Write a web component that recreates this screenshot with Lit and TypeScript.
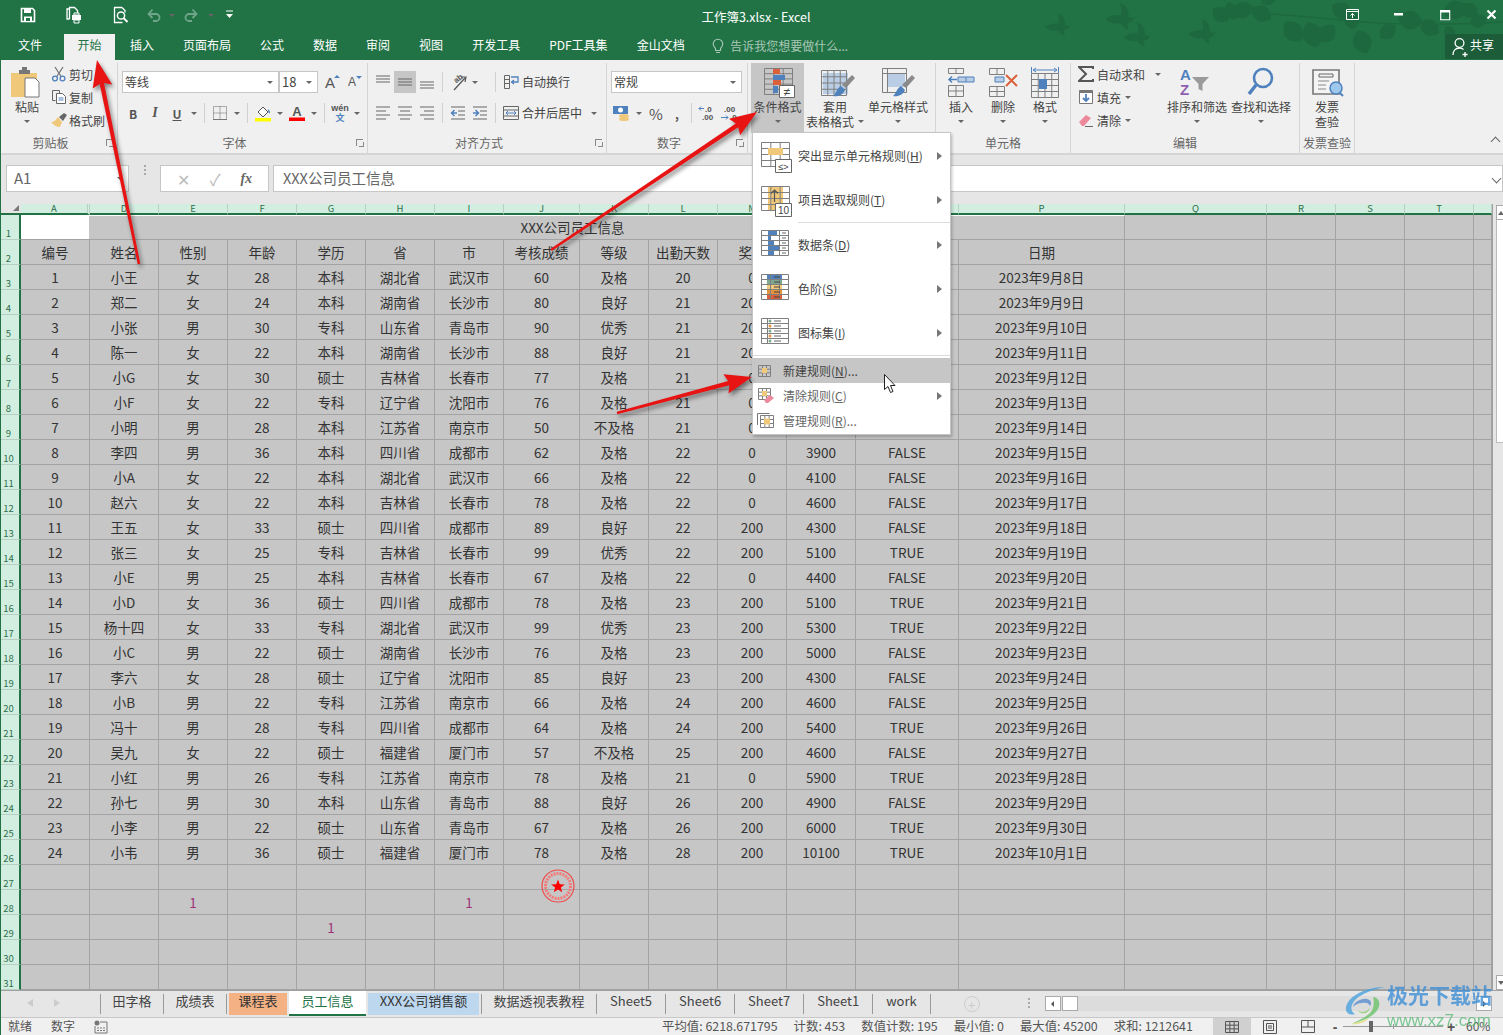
import { LitElement, html, svg, css } from 'lit';
import { customElement } from 'lit/decorators.js';

// Sheet data: rows 3..26 of the workbook
const DATA = `1 小王 女 28 本科 湖北省 武汉市 60 及格 20 0 - - 2023年9月8日
2 郑二 女 24 本科 湖南省 长沙市 80 良好 21 200 - - 2023年9月9日
3 小张 男 30 专科 山东省 青岛市 90 优秀 21 200 - - 2023年9月10日
4 陈一 女 22 本科 湖南省 长沙市 88 良好 21 200 - - 2023年9月11日
5 小G 女 30 硕士 吉林省 长春市 77 及格 21 0 - - 2023年9月12日
6 小F 女 22 专科 辽宁省 沈阳市 76 及格 21 0 - - 2023年9月13日
7 小明 男 28 本科 江苏省 南京市 50 不及格 21 0 - - 2023年9月14日
8 李四 男 36 本科 四川省 成都市 62 及格 22 0 3900 FALSE 2023年9月15日
9 小A 女 22 本科 湖北省 武汉市 66 及格 22 0 4100 FALSE 2023年9月16日
10 赵六 女 22 本科 吉林省 长春市 78 及格 22 0 4600 FALSE 2023年9月17日
11 王五 女 33 硕士 四川省 成都市 89 良好 22 200 4300 FALSE 2023年9月18日
12 张三 女 25 专科 吉林省 长春市 99 优秀 22 200 5100 TRUE 2023年9月19日
13 小E 男 25 本科 吉林省 长春市 67 及格 22 0 4400 FALSE 2023年9月20日
14 小D 女 36 硕士 四川省 成都市 78 及格 23 200 5100 TRUE 2023年9月21日
15 杨十四 女 33 专科 湖北省 武汉市 99 优秀 23 200 5300 TRUE 2023年9月22日
16 小C 男 22 硕士 湖南省 长沙市 76 及格 23 200 5000 FALSE 2023年9月23日
17 李六 女 28 硕士 辽宁省 沈阳市 85 良好 23 200 4300 FALSE 2023年9月24日
18 小B 男 22 专科 江苏省 南京市 66 及格 24 200 4600 FALSE 2023年9月25日
19 冯十 男 28 专科 四川省 成都市 64 及格 24 200 5400 TRUE 2023年9月26日
20 吴九 女 22 硕士 福建省 厦门市 57 不及格 25 200 4600 FALSE 2023年9月27日
21 小红 男 26 专科 江苏省 南京市 78 及格 21 0 5900 TRUE 2023年9月28日
22 孙七 男 30 本科 山东省 青岛市 88 良好 26 200 4900 FALSE 2023年9月29日
23 小李 男 22 硕士 山东省 青岛市 67 及格 26 200 6000 TRUE 2023年9月30日
24 小韦 男 36 硕士 福建省 厦门市 78 及格 28 200 10100 TRUE 2023年10月1日`
  .split('\n')
  .map((l) => l.split(' ').map((c) => (c === '-' ? '' : c)));

const COLS = ['A', 'D', 'E', 'F', 'G', 'H', 'I', 'J', 'K', 'L', 'M', 'N', 'O', 'P', 'Q', 'R', 'S', 'T', ''];
const HEAD = ['编号', '姓名', '性别', '年龄', '学历', '省', '市', '考核成绩', '等级', '出勤天数', '奖金', '', '', '日期'];
const STRAY: Record<string, string> = { '28-2': '1', '28-6': '1', '29-4': '1' };

const NAV = ['文件', '开始', '插入', '页面布局', '公式', '数据', '审阅', '视图', '开发工具', 'PDF工具集', '金山文档'];

const GRAY = '#7f7f7f';
const BLUE = '#4f81bd';
const ORANGE = '#f0c87a';

// table outline with inner lines, used by most of the ribbon icons
const grid = (x: number, y: number, w: number, h: number, c: number, r: number, color = GRAY) => {
  let d = `M${x} ${y}h${w}v${h}h${-w}z`;
  for (let i = 1; i < c; i++) d += `M${x + (w * i) / c} ${y}v${h}`;
  for (let i = 1; i < r; i++) d += `M${x} ${y + (h * i) / r}h${w}`;
  return svg`<path d=${d} fill="none" stroke=${color} />`;
};

const icon = (w: number, h: number, body: unknown) =>
  html`<svg width=${w} height=${h} viewBox="0 0 ${w} ${h}">${body}</svg>`;

const brush = (dx: number, dy: number) => svg`
  <path d="M${dx + 24} ${dy + 2}l3 3-9 10-4-3z" fill="#8a8a8a" />
  <path d="M${dx + 13} ${dy + 13}l4 4c-2 5-7 7-12 6 3-2 3-7 8-10z" fill=${BLUE} />`;

const lines = (ys: number[], x: number, w: number, color = '#666') =>
  svg`<path d=${ys.map((y) => `M${x} ${y}h${w}`).join('')} stroke=${color} fill="none" />`;

const ICONS = {
  save: icon(16, 16, svg`<path d="M1.5 1.5h11l2 2v11h-13z" fill="none" stroke="#fff" stroke-width="1.6"/><path d="M4 2h7v4H4zM4 9.5h8v5H4z" fill="#fff"/><path d="M6 11h4v3H6z" fill="#217346"/>`),
  printPrev: icon(18, 18, svg`<path d="M4.5 13V1.5h5l3 3V7M4.5 13H2V3h2.5" fill="none" stroke="#fff" stroke-width="1.3"/><path d="M7 9h9v5H7z" fill="#fff"/><path d="M9 7h5v2H9zM9 14h5v3H9z" fill="none" stroke="#fff"/>`),
  preview: icon(18, 18, svg`<path d="M11 1.5H3.5v15h8M11 1.5l3 3v2" fill="none" stroke="#fff" stroke-width="1.3"/><circle cx="10" cy="9.5" r="3.6" fill="none" stroke="#fff" stroke-width="1.5"/><path d="M12.5 12l4 4" stroke="#fff" stroke-width="2"/>`),
  undo: icon(16, 16, svg`<path d="M3 7h7a3.5 3.5 0 0 1 0 7H7M6.5 2.5L2.5 7l4 4" fill="none" stroke="#6fa58a" stroke-width="1.8"/>`),
  redo: icon(16, 16, svg`<path d="M13 7H6a3.5 3.5 0 0 0 0 7h3M9.5 2.5l4 4.5-4 4" fill="none" stroke="#6fa58a" stroke-width="1.8"/>`),
  custom: icon(10, 12, svg`<path d="M1 2h7" stroke="#fff"/><path d="M1 5h7L4.5 9z" fill="#fff"/>`),
  bulb: icon(12, 16, svg`<path d="M3.5 10.5C2 9 1.2 8 1.2 6a4.8 4.8 0 0 1 9.6 0c0 2-.8 3-2.3 4.5v2h-5zM4 14.5h4" fill="none" stroke="#a9c7b6" stroke-width="1.1"/>`),
  ribbonMode: icon(14, 12, svg`<path d="M.5 .5h12v10H.5zM.5 2.5h12" fill="none" stroke="#fff"/><path d="M6.5 9V4.5M4.5 6.5l2-2 2 2" fill="none" stroke="#fff"/>`),
  minimize: icon(10, 4, svg`<path d="M0 0h9v2.5H0z" fill="#fff"/>`),
  maximize: icon(11, 11, svg`<path d="M.7 .7h9v9h-9z" fill="none" stroke="#fff" stroke-width="1.1"/><path d="M0 0h10v2.5H0z" fill="#fff"/>`),
  close: icon(12, 12, svg`<path d="M1.5 1.5l8 8M9.5 1.5l-8 8" stroke="#fff" stroke-width="2.2"/>`),
  user: icon(18, 20, svg`<circle cx="7.5" cy="6" r="4.4" fill="none" stroke="#fff" stroke-width="1.3"/><path d="M1 18c0-4 2.5-7 6.5-7 1.5 0 3 .5 4 1.5M13 15v5M10.5 17.5h5" fill="none" stroke="#fff" stroke-width="1.3"/>`),

  paste: icon(34, 36, svg`<path d="M1 8h26v24H1z" fill=${ORANGE}/><path d="M9 5h3V2h5v3h3v4H9z" fill="#777"/><path d="M15 13h10l4 4v15H15z" fill="#fff" stroke="#777"/>`),
  cut: icon(16, 16, svg`<path d="M4 1l6.5 10M12 1L5.5 11" stroke="#777" stroke-width="1.3"/><circle cx="4" cy="12.5" r="2.4" fill="none" stroke=${BLUE} stroke-width="1.3"/><circle cx="11.5" cy="12.5" r="2.4" fill="none" stroke=${BLUE} stroke-width="1.3"/>`),
  copy: icon(16, 16, svg`<path d="M1.5 1.5h7v3M1.5 1.5v10h3" fill="none" stroke="#666"/><path d="M5.5 4.5h6l3 3v7h-9z" fill="#fff" stroke="#666"/><path d="M7.5 9h5M7.5 11h5" stroke=${BLUE}/>`),
  painter: icon(18, 16, svg`<path d="M9 5l5-4 3 2-4 6z" fill="#666"/><path d="M8 5l4 5-2 5c-3 0-7-2-9-5 3 0 5-2 7-5z" fill=${ORANGE}/>`),
  borders: icon(16, 16, svg`<path d="M1.5 1.5h13v13h-13zM8 1.5v13M1.5 8h13" fill="none" stroke="#666" stroke-dasharray="1 1"/><path d="M1 14.5h14" stroke="#777"/>`),
  fill: icon(18, 18, svg`<path d="M4 8l5-5 5 5-5 5z" fill="#fff" stroke="#555"/><path d="M14 5c2 2 2.5 3 1.5 4.5-1-.5-1.5-1.5-1.5-4.5z" fill=${BLUE}/><path d="M1 14h16v3.5H1z" fill="#ffff00"/>`),
  color: icon(18, 18, svg`<text x="9" y="12" text-anchor="middle" font-size="13" font-weight="700" fill="#555" font-family="Liberation Sans">A</text><path d="M1 13.5h16V17H1z" fill="#f00"/>`),
  wen: icon(18, 20, svg`<text x="9" y="8" text-anchor="middle" font-size="9" fill="#555" font-family="Liberation Sans">wén</text><text x="9" y="18" text-anchor="middle" font-size="9" fill=${BLUE} font-family="Noto Sans CJK SC">文</text>`),
  alignT: icon(16, 16, lines([2, 5, 8], 1, 14)),
  alignM: icon(16, 16, lines([5, 8, 11], 1, 14)),
  alignB: icon(16, 16, lines([8, 11, 14], 1, 14)),
  left: icon(16, 16, svg`<path d="M1 2h14M1 6h10M1 10h14M1 14h10" stroke="#666" fill="none"/>`),
  center: icon(16, 16, svg`<path d="M1 2h14M3 6h10M1 10h14M3 14h10" stroke="#666" fill="none"/>`),
  right: icon(16, 16, svg`<path d="M1 2h14M5 6h10M1 10h14M5 14h10" stroke="#666" fill="none"/>`),
  orient: icon(18, 18, svg`<text x="6" y="11" font-size="8" fill="#555" transform="rotate(-40 6 9)" font-family="Liberation Sans">ab</text><path d="M5 17L16 5M12 4l5 0-1 5" fill="none" stroke="#555" stroke-width="1.2"/>`),
  outdent: icon(16, 16, svg`${lines([2, 14], 1, 14)}${lines([6, 10], 8, 7)}<path d="M7 8H2M4.5 5L1.5 8l3 3" fill="none" stroke=${BLUE} stroke-width="1.5"/>`),
  indent: icon(16, 16, svg`${lines([2, 14], 1, 14)}${lines([6, 10], 8, 7)}<path d="M1 8h5M3.5 5l3 3-3 3" fill="none" stroke=${BLUE} stroke-width="1.5"/>`),
  wrap: icon(16, 16, svg`<path d="M1.5 1.5h5v13h-5z" fill="none" stroke="#666"/><path d="M1.5 5.5h5M1.5 9.5h5" stroke="#666"/><path d="M8 3h7v5H9M11 6L8.5 8l2.5 2" fill="none" stroke=${BLUE} stroke-width="1.3"/>`),
  merge: icon(16, 16, svg`<path d="M.5 1.5h15v13H.5zM.5 5h15M.5 11h15" fill="none" stroke="#666"/><path d="M3 8h10M5 6L3 8l2 2M11 6l2 2-2 2" fill="none" stroke=${BLUE}/>`),
  currency: icon(20, 18, svg`<path d="M1 2h15v8H1z" fill=${BLUE}/><circle cx="8.5" cy="6" r="2.5" fill="#fff"/><ellipse cx="12" cy="12" rx="5" ry="2" fill=${ORANGE}/><ellipse cx="12" cy="15" rx="5" ry="2" fill=${ORANGE}/>`),
  incDec: icon(20, 18, svg`<text x="8" y="8" font-size="8" fill="#555" font-family="Liberation Sans">.0</text><text x="5" y="16" font-size="8" fill="#555" font-family="Liberation Sans">.00</text><path d="M7 4.5H2M4 2.5l-2 2 2 2" fill="none" stroke=${BLUE}/>`),
  decDec: icon(20, 18, svg`<text x="5" y="8" font-size="8" fill="#555" font-family="Liberation Sans">.00</text><text x="11" y="16" font-size="8" fill="#555" font-family="Liberation Sans">.0</text><path d="M2 13.5h7M7 11.5l2 2-2 2" fill="none" stroke=${BLUE}/>`),

  condFormat: icon(40, 36, svg`${grid(6.5, 3.5, 28, 26, 3, 5)}
    <path d="M15 4h7v5h-7z" fill="#d9603b"/><path d="M15 10h12v5H15z" fill=${BLUE}/><path d="M15 15h8v5h-8z" fill="#d9603b"/><path d="M15 21h5v7h-5z" fill=${BLUE}/>
    <path d="M21.5 20.5h15v12h-15z" fill="#fff" stroke="#666"/><text x="29" y="30.5" text-anchor="middle" font-size="12" fill="#444" font-family="Liberation Sans">≠</text>`),
  tableFormat: icon(42, 36, svg`<path d="M9 8h25v21H9z" fill="#b9cde5"/>${grid(7.5, 5.5, 25, 25, 4, 4)}${brush(14, 8)}`),
  cellStyle: icon(42, 36, svg`${grid(5.5, 3.5, 24, 24, 1, 1)}<path d="M10 8h18v14H10z" fill="#b9cde5"/><path d="M5.5 8.5h24M10.5 3.5v24" stroke=${GRAY}/>${brush(11, 8)}`),
  insert: icon(34, 36, svg`${grid(4.5, 3.5, 15, 5, 2, 1)}<path d="M14 12h16v5H14z" fill="#b9cde5" stroke=${BLUE}/><path d="M22 12v5" stroke=${BLUE}/><path d="M13 14.5H5M8 11.5l-3 3 3 3" fill="none" stroke=${BLUE} stroke-width="1.5"/>${grid(4.5, 20.5, 15, 11, 2, 2)}`),
  remove: icon(36, 36, svg`${grid(4.5, 3.5, 15, 6, 2, 1)}<path d="M10 12h9v5h-9z" fill="#b9cde5" stroke=${BLUE}/>${grid(4.5, 21.5, 15, 10, 2, 2)}<path d="M21 10l11 11M32 10L21 21" stroke="#d9603b" stroke-width="2"/>`),
  format: icon(34, 36, svg`<path d="M5 5h24M8 3L5 5l3 2M26 3l3 2-3 2M3.5 2v6M30.5 2v6" fill="none" stroke=${BLUE}/>${grid(3.5, 8.5, 27, 24, 4, 4)}<path d="M11 14h8v10h-8z" fill=${BLUE}/>`),
  sigma: icon(16, 16, svg`<path d="M15 3V1H1l7 7-7 7h14v-2" fill="none" stroke="#555" stroke-width="2"/>`),
  fillDown: icon(16, 16, svg`<path d="M1.5 1.5h13v13h-13z" fill="#fff" stroke="#777"/><path d="M1.5 1.5h13v2.5h-13z" fill="#777"/><path d="M8 5v7M5 9l3 3 3-3" fill="none" stroke=${BLUE} stroke-width="1.8"/>`),
  eraser: icon(16, 16, svg`<path d="M1 10l7-7 5 3-7 8H4z" fill="#ec8a9c"/><path d="M7 14.5h8" stroke="#666"/>`),
  sort: icon(36, 36, svg`<text x="1" y="15" font-size="15" fill=${BLUE} font-family="Liberation Sans" font-weight="700">A</text><text x="1" y="30" font-size="15" fill="#8e5fb0" font-family="Liberation Sans" font-weight="700">Z</text><path d="M13 12h17l-6.5 7v7l-4-2v-5z" fill="#9a9a9a"/>`),
  find: icon(36, 36, svg`<circle cx="20" cy="13" r="9" fill="none" stroke=${BLUE} stroke-width="2.6"/><path d="M13 20L6 29" stroke=${BLUE} stroke-width="3.5"/>`),
  invoice: icon(36, 36, svg`<path d="M4 5h26v24H4z" fill="#f4f4f4" stroke="#777" stroke-width="1.6"/><path d="M10 9h14v3H10z" fill="none" stroke="#666"/><path d="M9 16h11M9 20h8M9 24h8" stroke="#888"/><circle cx="27" cy="23" r="6" fill="#9ec8ee" stroke=${BLUE} stroke-width="1.5"/><path d="M31 28l3 3" stroke=${BLUE} stroke-width="2"/>`),

  mHighlight: icon(32, 33, svg`${grid(1.5, 2.5, 28, 24, 3, 4)}<path d="M8 8h15v7H8z" fill=${ORANGE}/><path d="M15.5 19.5h16v13h-16z" fill="#fff" stroke="#666"/><text x="23.5" y="30" text-anchor="middle" font-size="9" fill="#444" font-family="Liberation Sans">≤&gt;</text>`),
  mTop: icon(32, 33, svg`<path d="M8 2h15v24H8z" fill=${ORANGE}/>${grid(1.5, 2.5, 28, 24, 3, 4)}<path d="M14.5 18V6M11 9.5l3.5-3.5 3.5 3.5" fill="none" stroke="#555" stroke-width="1.2"/><path d="M15.5 19.5h16v13h-16z" fill="#fff" stroke="#666"/><text x="23.5" y="30" text-anchor="middle" font-size="10" fill="#444" font-family="Liberation Sans">10</text>`),
  mBars: icon(32, 33, svg`${grid(1.5, 1.5, 27, 25, 3, 5)}<path d="M8 2h9v4H8zM8 7h3v4H8zM8 12h6v4H8zM8 17h11v4H8zM8 22h6v4H8z" fill=${BLUE}/>${lines([4, 9, 14, 19, 24], 22, 4)}`),
  mScale: icon(32, 33, svg`<path d="M7 2h15v5H7z" fill=${BLUE}/><path d="M7 7h15v5H7z" fill="#7fa98f"/><path d="M7 12h15v5H7z" fill=${ORANGE}/><path d="M7 17h15v5H7z" fill="#e8923f"/><path d="M7 22h15v5H7z" fill="#d9603b"/>${grid(1.5, 1.5, 27, 25, 3, 5)}${lines([4, 9, 14, 19, 24], 14, 6, '#444')}`),
  mIcons: icon(32, 33, svg`${grid(1.5, 1.5, 27, 25, 1, 5)}<path d="M7.5 1.5v25" stroke=${GRAY}/><circle cx="10" cy="4" r="1.5" fill="#7fa98f"/><circle cx="10" cy="9" r="1.5" fill="#e8923f"/><circle cx="10" cy="14" r="1.5" fill="#7fa98f"/><circle cx="10" cy="19" r="1.5" fill="#e8923f"/><circle cx="10" cy="24" r="1.5" fill="#7fa98f"/>${lines([4, 9, 14, 19, 24], 14, 7)}`),
  mNew: icon(16, 16, svg`${grid(1.5, 2.5, 12, 11, 3, 3)}<path d="M5 5h5v5H5z" fill=${ORANGE}/>`),
  mClear: icon(18, 18, svg`${grid(1.5, 1.5, 12, 11, 3, 3)}<path d="M5 4h5v5H5z" fill=${ORANGE}/><path d="M7 13l6-5 4 3-6 5H9z" fill="#ec8a9c"/>`),
  mManage: icon(18, 18, svg`<path d="M.5 13V1.5h12" fill="none" stroke="#777"/>${grid(3.5, 3.5, 13, 12, 3, 3)}<path d="M7 6.5h6v6H7z" fill=${ORANGE}/>`),

  gridView: icon(14, 12, grid(.5, .5, 13, 11, 3, 3, '#555')),
  pageView: icon(14, 14, svg`<path d="M.5 .5h13v13H.5z" fill="none" stroke="#555"/><path d="M3.5 3.5h7v7h-7zM5 6h4M5 8h4" fill="none" stroke="#555"/>`),
  breakView: icon(14, 13, svg`<path d="M.5 .5h13v12H.5zM.5 7h13M7 .5V7" fill="none" stroke="#555"/>`),
  macro: icon(14, 14, svg`<circle cx="3" cy="3" r="2.5" fill="#777"/><path d="M6 2h7v11H1V6" fill="none" stroke="#777"/><path d="M3 8h8M3 10.5h8" stroke="#777" stroke-dasharray="2 1"/>`),
};

// solid arrow from tail to tip, with a tapered shaft
const arrow = (x1: number, y1: number, x2: number, y2: number) => {
  const len = Math.hypot(x2 - x1, y2 - y1);
  const ux = (x2 - x1) / len;
  const uy = (y2 - y1) / len;
  const at = (along: number, side: number) =>
    `${(x2 - ux * along - uy * side).toFixed(1)},${(y2 - uy * along + ux * side).toFixed(1)}`;
  const pts = [at(len, -1.3), at(24, -2.2), at(27, -10), at(0, 0), at(27, 10), at(24, 2.2), at(len, 1.3)];
  return svg`<polygon points=${pts.join(' ')} fill="#e81313" />`;
};

const LEAVES: [number, number, number, number][] = [
  [1213, 8, 20, 40], [1228, 2, 19, 70], [1232, 14, 22, -20], [1252, 8, 22, 30], [1262, 4, 18, -40],
  [1285, 22, 25, 50], [1308, 22, 27, 70], [1320, 42, 22, -50], [1332, 5, 22, 30], [1350, 10, 20, 80],
  [1358, 30, 25, 70], [1380, 38, 20, -40], [1398, 18, 25, 10], [1420, 22, 22, 30], [1443, 12, 25, -10],
  [1462, 4, 20, 40], [1470, 24, 18, -20], [1446, 26, 15, 60],
];

const bird = (x: number, y: number, s: number) => svg`<path transform="translate(${x} ${y}) scale(${s})"
  d="M-10 1C-6 -2 -2 -3 2 -2C3 -6 3 -9 1 -12C6 -10 9 -6 8 -1C10 0 12 0 13 -1C12 2 10 4 7 4L8 9C5 8 3 6 2 4C-2 5 -6 4 -10 1z" />`;

@customElement('app-root')
export class AppRoot extends LitElement {
  static styles = css`
    :host {
      display: block;
      position: relative;
      width: 1503px;
      height: 1035px;
      overflow: hidden;
      background: #e6e6e6;
      font-family: "Noto Sans CJK SC", "Liberation Sans", sans-serif;
      font-size: 12px;
      color: #444;
    }
    * { box-sizing: border-box; }
    svg { display: block; flex: none; }
    .edge { position: absolute; left: 0; top: 60px; width: 1px; bottom: 0; background: #217346; }

    /* title bar */
    .titlebar { position: relative; height: 60px; background: #217346; color: #fff; }
    .leaves { position: absolute; left: 0; top: 0; fill: #1e6840; stroke: none; }
    .qatrow { position: relative; height: 30px; display: grid; grid-template-columns: 1fr auto 1fr; align-items: center; }
    .qat { display: flex; align-items: center; padding-left: 5px; }
    .qat span { width: 46px; display: flex; justify-content: center; }
    .qat span.s { width: 22px; }
    .qat span.m { width: 26px; }
    .qat i { margin: 0 3px 0 4px; border-top-color: #6fa58a; }
    .title { margin: 2px 0 0 9px; font-size: 12.5px; }
    .win { display: flex; justify-content: flex-end; align-items: center; }
    .win span { width: 46px; display: flex; justify-content: center; }
    .win span:last-child { width: 35px; justify-content: flex-end; padding-right: 5px; }
    .navrow { position: relative; height: 30px; display: flex; align-items: flex-end; }
    .tab { height: 26px; line-height: 22px; padding: 0 14.5px; white-space: nowrap; }
    .tab:first-child { margin-left: 3.5px; }
    .tab.on { margin: 0 .5px 0 7.5px; padding: 0 13.5px; background: #f0f0f0; color: #217346; }
    .tell { display: flex; align-items: center; gap: 6px; height: 26px; margin-left: 13px; padding-bottom: 3px; color: #a9c7b6; }
    .share { margin-left: auto; align-self: flex-start; margin-top: 4px; width: 58px; height: 25px; background: #1c5c38; display: flex; align-items: center; padding-left: 7px; }
    .share span { margin: -4px 0 0 0; }

    /* ribbon */
    .ribbon { height: 95px; background: #f0f0f0; border-bottom: 2px solid #d5d5d5; display: flex; padding-top: 3px; }
    .group { display: flex; flex-direction: column; height: 90px; border-right: 1px solid #d5d5d5; flex: none; }
    .body { height: 70px; display: flex; flex: none; }
    .label { height: 20px; line-height: 19px; text-align: center; color: #666; padding-right: 16px; position: relative; white-space: nowrap; }
    .label.plain { padding-right: 0; }
    .launch { position: absolute; right: 4px; top: 6px; width: 7px; height: 7px; border: 1px solid #888; border-width: 1px 0 0 1px; }
    .launch::after { content: ''; position: absolute; right: -1px; bottom: -1px; width: 4px; height: 4px; border: 1px solid #888; border-width: 0 1px 1px 0; }
    .w-clip { width: 118px; }
    .w-font { width: 250px; }
    .w-align { width: 239px; }
    .w-num { width: 141px; }
    .w-style { width: 188px; }
    .w-cell { width: 135px; }
    .w-edit { width: 229px; }
    .w-inv { width: 55px; }
    .big { display: flex; flex-direction: column; align-items: center; padding-top: 2px; line-height: 15px; flex: none; white-space: nowrap; }
    .big svg { margin-bottom: -2px; }
    .big.hot { background: #c6c6c6; }
    .big div { height: 15px; display: flex; align-items: center; gap: 4px; }
    .b42 { width: 42px; }
    .b53 { width: 53px; }
    .b54 { width: 54px; }
    .b62 { width: 62px; }
    .b64 { width: 64px; }
    .smalls { display: flex; flex-direction: column; gap: 1px; flex: none; }
    .smalls > div { height: 22px; display: flex; align-items: center; gap: 1px; white-space: nowrap; }
    .smalls .ic { width: 18px; display: flex; justify-content: center; }
    .smalls i { margin-left: 3px; }
    .smalls i.far { margin-left: 9px; }
    .pad6 { padding-left: 6px; }
    .pad5 { padding-left: 5px; }
    .pad4 { padding-left: 4px; }
    .pad3 { padding-left: 3px; }
    .col-s1 { width: 70px; margin-left: 2px; }
    .col-s2 { width: 89px; }
    .col-s2 .ic { width: 20px; }
    .tools { display: flex; flex-direction: column; gap: 9px; padding: 8px 0 0 4px; width: 100%; }
    .row { height: 22px; display: flex; align-items: center; white-space: nowrap; }
    .tx { margin-top: -2px; }
    .cell22 { width: 22px; height: 22px; display: flex; align-items: center; justify-content: center; flex: none; font-weight: 700; color: #555; }
    .cell20 { width: 20px; height: 22px; display: flex; align-items: center; justify-content: center; flex: none; font-weight: 700; color: #555; }
    .cell22.on { background: #c6c6c6; }
    .pct { font-size: 15px; font-weight: 400; }
    .it { font-style: italic; font-family: "Liberation Serif", serif; font-size: 14px; }
    .un { text-decoration: underline; }
    .car { width: 12px; display: flex; justify-content: center; flex: none; }
    .sp10 { width: 10px; flex: none; }
    .mr6 { margin-left: 6px; }
    .sep { width: 1px; height: 20px; background: #d0d0d0; margin: 0 4px; flex: none; }
    .box { height: 22px; background: #fff; border: 1px solid #c6c6c6; display: flex; align-items: center; justify-content: space-between; padding: 0 5px 0 2px; flex: none; font-size: 12px; }
    .box span { margin-top: -2px; }
    .fontname { width: 157px; }
    .fontsize { width: 39px; font-size: 13px; }
    .numfmt { width: 131px; }
    .aa { color: #555; position: relative; font-family: "Liberation Sans", sans-serif; width: 22px; text-align: center; }
    .aa.up { font-size: 15px; margin-left: 1px; }
    .aa.dn { font-size: 12px; }
    .aa b { position: absolute; right: 1px; top: 1px; width: 0; height: 0; border: 3px solid transparent; border-top: 0; border-bottom: 3px solid #4f81bd; }
    .aa.dn b { border-bottom: 0; border-top: 3px solid #4f81bd; }
    .collapse { margin: auto 4px 8px auto; width: 7px; height: 7px; border: solid #666; border-width: 1.5px 0 0 1.5px; transform: rotate(45deg); }
    i.caret, .caret { display: block; width: 0; height: 0; border: 3px solid transparent; border-bottom: 0; border-top: 3px solid #666; flex: none; }

    /* formula bar */
    .formula { height: 49px; padding: 10px 0 0 6px; display: flex; align-items: flex-start; background: #e6e6e6; }
    .fbox { height: 27px; background: #fff; border: 1px solid #c6c6c6; display: flex; align-items: center; }
    .namebox { width: 123px; font-size: 15px; color: #666; padding: 0 5px 0 7px; justify-content: space-between; }
    .namebox span, .fninput span:first-child { margin-top: -2px; }
    .dots { width: 31px; display: flex; flex-direction: column; align-items: center; gap: 2px; }
    .dots b { width: 2px; height: 2px; background: #aaa; }
    .fnbtns { width: 109px; justify-content: space-around; color: #bbb; font-size: 16px; padding: 0 6px; }
    .fx { font-family: "Liberation Serif", serif; font-style: italic; font-weight: 700; color: #666; font-size: 14px; }
    .fninput { flex: 1; margin-left: 4px; font-size: 14.5px; color: #666; padding-left: 9px; justify-content: space-between; }
    .chev { margin-right: 2px; width: 7px; height: 7px; border: solid #666; border-width: 0 1.5px 1.5px 0; transform: rotate(45deg); }

    /* sheet */
    .sheetrow { display: flex; height: 786px; }
    .sheet {
      width: 1493px; flex: none; border-right: 1px solid #a0a0a0;
      display: grid;
      grid-template-columns: 21px repeat(7, 69px) 76px repeat(4, 69px) 103px 166px 142px repeat(3, 69px) 18px;
      grid-template-rows: 11px repeat(31, 25px);
      font-size: 13.5px;
      color: #333;
      background: #c6c6c6;
    }
    .corner { background: #e6e6e6; border-bottom: 2px solid #217346; position: relative; }
    .corner::after { content: ''; position: absolute; right: 2px; bottom: 2px; border: 3px solid transparent; border-right-color: #777; border-bottom-color: #777; }
    .ch { background: #d2eee0; border-right: 1px solid #b8cfc3; border-bottom: 2px solid #217346; font-size: 9.5px; line-height: 9px; text-align: center; color: #2e6e4c; }
    .ch.hid { border-right: 3px double #b8cfc3; }
    .rh { background: #d2eee0; border-right: 2px solid #217346; border-bottom: 1px solid #b8cfc3; font-size: 9.5px; line-height: 10px; color: #2e6e4c; display: flex; align-items: flex-end; justify-content: center; padding: 0 2px 1px 0; }
    .c { border-right: 1px solid #a3a3a3; border-bottom: 1px solid #a3a3a3; display: flex; align-items: center; justify-content: center; white-space: nowrap; overflow: hidden; }
    .c.stray { color: #a0307a; }
    .c.merged { grid-column: 2 / span 14; background: linear-gradient(90deg, #fff 68px, #c6c6c6 68px); border-top: 1px solid #fff; padding-bottom: 2px; }
    .vscroll { flex: 1; margin-left: 3px; display: flex; flex-direction: column; background: #e6e6e6; }
    .vbtn { height: 15px; background: #fff; border: 1px solid #aaa; border-right: 0; position: relative; margin-top: 1px; }
    .vbtn::after { content: ''; position: absolute; left: 1px; top: 5px; border: 3px solid transparent; border-top: 0; border-bottom: 4px solid #666; }
    .vbtn.dn::after { border-bottom: 0; border-top: 4px solid #666; }
    .vthumb { height: 223px; background: #fff; border-left: 1px solid #bbb; border-bottom: 1px solid #bbb; }
    .vgap { flex: 1; }

    /* sheet tabs */
    .tabs { height: 27px; border-top: 1px solid #a0a0a0; background: #e6e6e6; display: flex; align-items: flex-start; font-size: 13px; color: #444; white-space: nowrap; }
    .tnav { width: 101px; height: 20px; margin-top: 3px; border-right: 1px solid #999; display: flex; gap: 21px; padding: 5px 0 0 27px; }
    .tri { width: 0; height: 0; border: 4px solid transparent; border-left: 0; border-right: 6px solid #ccc; }
    .tri.r { border-right: 0; border-left: 6px solid #ccc; }
    .t { height: 20px; line-height: 14px; margin-top: 3px; padding: 0 11.5px; border-right: 1px solid #999; flex: none; }
    .t.wide { padding: 0 13px; }
    .t.pl { padding: 0 11.5px; }
    .t.orange { background: #f4b183; border: 0; width: 58px; height: 22px; margin: 2px 2px 0 2px; text-align: center; line-height: 16px; padding: 0; color: #333; }
    .t.active { background: #fff; border: 0; border-bottom: 2px solid #217346; color: #217346; width: 77px; height: 25px; margin-top: 0; text-align: center; line-height: 20px; padding: 0; }
    .t.sky { background: #bdd7ee; border: 0; width: 111px; height: 22px; margin: 2px 2px 0 2px; text-align: center; line-height: 16px; padding: 0; color: #333; }
    .tsep { width: 1px; height: 20px; margin-top: 3px; background: #999; flex: none; }
    .plus { width: 16px; height: 16px; border-radius: 50%; border: 1px solid #ccc; margin: 5px 0 0 33px; display: flex; align-items: center; justify-content: center; color: #ccc; line-height: 1; font-size: 13px; flex: none; }
    .tdots { display: flex; flex-direction: column; gap: 2px; margin: 7px 0 0 48px; flex: none; }
    .tdots b { width: 2px; height: 2px; background: #aaa; }
    .hscroll { margin: 5px 11px 0 15px; flex: 1; height: 15px; background: #dcdcdc; display: flex; justify-content: space-between; }
    .hbtn { width: 16px; height: 15px; background: #fff; border: 1px solid #aaa; display: flex; align-items: center; justify-content: center; }
    .hbtn .tri { border-right-color: #555; border-left-color: #555; border-width: 3px; }
    .hleft { display: flex; gap: 1px; }

    /* status bar */
    .status { height: 18px; border-top: 1px solid #c8c8c8; background: #f0f0f0; display: flex; align-items: center; color: #555; font-size: 12px; white-space: nowrap; }
    .sleft { width: 662px; flex: none; display: flex; align-items: center; gap: 19px; padding-left: 8px; }
    .sleft span, .stats span, .pct60 { margin-top: -2px; }
    .stats { display: flex; gap: 16px; width: 551px; flex: none; font-size: 12.4px; }
    .view { width: 38px; height: 17px; display: flex; align-items: center; justify-content: center; flex: none; }
    .view.on { background: #d0d0d0; }
    .zoombar { display: flex; align-items: center; margin-left: 2px; color: #555; }
    .zoombar b { font-size: 14px; line-height: 14px; font-weight: 700; width: 12px; text-align: center; font-family: "Liberation Sans", sans-serif; }
    .track { width: 100px; height: 1px; background: #999; margin: 0 2px; position: relative; }
    .track::before { content: ''; position: absolute; left: 26px; top: -5px; width: 4px; height: 11px; background: #666; }
    .track::after { content: ''; position: absolute; left: 50px; top: -2px; width: 1px; height: 5px; background: #999; }
    .pct60 { margin-left: 9px; }

    /* drop-down menu */
    .menu { position: absolute; left: 752px; top: 132px; width: 199px; height: 303px; background: #fff; border: 1px solid #c6c6c6; box-shadow: 1px 2px 3px rgba(0, 0, 0, .25); padding: 1px 0; }
    .mi { height: 44px; display: flex; align-items: center; gap: 6px; padding-left: 7px; color: #444; position: relative; white-space: nowrap; }
    .mi .big-t { margin-top: -2px; }
    .mi.small { height: 25px; gap: 0; padding-left: 4px; color: #666; }
    .mi.small .mic { width: 26px; flex: none; }
    .mi.hot { background: #c6c6c6; color: #444; }
    .mi > .more { position: absolute; left: 184px; top: 50%; margin-top: -4px; border: 4px solid transparent; border-right: 0; border-left: 5px solid #777; }
    .msep { height: 1px; background: #dcdcdc; margin: 0 0 0 45px; }
    .msep.full { margin: 0 0 2px 0; }

    /* overlays */
    .arrows { position: absolute; left: 0; top: 0; filter: drop-shadow(2px 3px 2px rgba(0, 0, 0, .45)); pointer-events: none; }
    .cursor { position: absolute; left: 884px; top: 374px; }
    .stamp { position: absolute; left: 540px; top: 868px; }
    .mark { position: absolute; left: 1345px; top: 985px; width: 158px; height: 45px; opacity: .8; }
    .mark svg { position: absolute; left: 0; top: 0; }
    .mark .cn { position: absolute; left: 42px; top: -6px; font-size: 21px; line-height: 30px; font-weight: 700; color: #3f8fd6; white-space: nowrap; }
    .mark .en { position: absolute; left: 42px; top: 25px; font-family: "Liberation Sans", sans-serif; font-size: 17px; line-height: 22px; color: #5dbb7a; white-space: nowrap; }
  `;

  private small(ic: unknown, text: string, caret = '') {
    return html`<div><span class="ic">${ic}</span>${text}${caret ? html`<i class="caret ${caret}"></i>` : ''}</div>`;
  }

  private cells() {
    const out: unknown[] = [];
    out.push(html`<div class="corner"></div>`);
    COLS.forEach((c, i) => out.push(html`<div class="ch ${i === 0 ? 'hid' : ''}">${c}</div>`));
    for (let r = 1; r <= 31; r++) {
      out.push(html`<div class="rh">${r}</div>`);
      if (r === 1) {
        out.push(html`<div class="c merged">XXX公司员工信息</div>`);
        for (let i = 14; i < COLS.length; i++) out.push(html`<div class="c"></div>`);
        continue;
      }
      const row = r === 2 ? HEAD : DATA[r - 3] ?? [];
      COLS.forEach((_, i) => {
        const stray = STRAY[`${r}-${i}`];
        out.push(html`<div class="c ${stray ? 'stray' : ''}">${stray ?? row[i] ?? ''}</div>`);
      });
    }
    return out;
  }

  private menu() {
    const large = (ic: unknown, text: string, key: string) =>
      html`<div class="mi">${ic}<span class="big-t">${text}(<u>${key}</u>)</span><span class="more"></span></div>`;
    return html`<div class="menu">
      ${large(ICONS.mHighlight, '突出显示单元格规则', 'H')}
      ${large(ICONS.mTop, '项目选取规则', 'T')}
      <div class="msep"></div>
      ${large(ICONS.mBars, '数据条', 'D')}
      ${large(ICONS.mScale, '色阶', 'S')}
      ${large(ICONS.mIcons, '图标集', 'I')}
      <div class="msep full"></div>
      <div class="mi small hot"><span class="mic">${ICONS.mNew}</span><span>新建规则(<u>N</u>)...</span></div>
      <div class="mi small"><span class="mic">${ICONS.mClear}</span><span>清除规则(<u>C</u>)</span><span class="more"></span></div>
      <div class="mi small"><span class="mic">${ICONS.mManage}</span><span>管理规则(<u>R</u>)...</span></div>
    </div>`;
  }

  render() {
    const caret = html`<span class="car"><i class="caret"></i></span>`;
    return html`
      <div class="titlebar">
        <svg class="leaves" width="1503" height="60">
          ${bird(1056, 26, 1.1)} ${bird(1118, 18, 1.3)} ${bird(1135, 36, 1.2)} ${bird(1200, 33, 1.2)}
          <path d="M1215 12C1260 12 1300 16 1340 20S1440 26 1503 22" fill="none" stroke="#1e6840" stroke-width="1.5" />
          ${LEAVES.map(([x, y, l, r]) => svg`<path transform="translate(${x} ${y}) rotate(${r})"
            d="M0 0C${l * 0.3} ${-l * 0.5} ${l * 0.7} ${-l * 0.5} ${l} 0C${l * 0.7} ${l * 0.5} ${l * 0.3} ${l * 0.5} 0 0z" />`)}
        </svg>
        <div class="qatrow">
          <div class="qat">
            <span>${ICONS.save}</span><span>${ICONS.printPrev}</span><span>${ICONS.preview}</span>
            <span class="s">${ICONS.undo}</span><i class="caret"></i><span class="m">${ICONS.redo}</span><i class="caret"></i>
            <span class="m">${ICONS.custom}</span>
          </div>
          <div class="title">工作簿3.xlsx - Excel</div>
          <div class="win">
            <span>${ICONS.ribbonMode}</span><span>${ICONS.minimize}</span><span>${ICONS.maximize}</span><span>${ICONS.close}</span>
          </div>
        </div>
        <div class="navrow">
          ${NAV.map((n, i) => html`<div class="tab ${i === 1 ? 'on' : ''}">${n}</div>`)}
          <div class="tell">${ICONS.bulb}<span>告诉我您想要做什么...</span></div>
          <div class="share">${ICONS.user}<span>共享</span></div>
        </div>
      </div>

      <div class="ribbon">
        <div class="group w-clip">
          <div class="body pad6">
            <div class="big b42">${ICONS.paste}粘贴<div><i class="caret"></i></div></div>
            <div class="smalls col-s1">
              ${this.small(ICONS.cut, '剪切')} ${this.small(ICONS.copy, '复制')} ${this.small(ICONS.painter, '格式刷')}
            </div>
          </div>
          <div class="label">剪贴板<span class="launch"></span></div>
        </div>

        <div class="group w-font">
          <div class="body"><div class="tools">
            <div class="row">
              <div class="box fontname"><span>等线</span><i class="caret"></i></div>
              <div class="box fontsize"><span>18</span><i class="caret"></i></div>
              <span class="aa up">A<b></b></span><span class="aa dn">A<b></b></span>
            </div>
            <div class="row">
              <span class="cell22">B</span><span class="cell22 it">I</span><span class="cell22 un">U</span>${caret}
              <span class="sep"></span>
              <span class="cell22">${ICONS.borders}</span>${caret}
              <span class="sep"></span>
              <span class="cell22">${ICONS.fill}</span>${caret}
              <span class="cell22">${ICONS.color}</span>${caret}
              <span class="sep"></span>
              <span class="cell22">${ICONS.wen}</span>${caret}
            </div>
          </div></div>
          <div class="label">字体<span class="launch"></span></div>
        </div>

        <div class="group w-align">
          <div class="body"><div class="tools">
            <div class="row">
              <span class="cell22">${ICONS.alignT}</span><span class="cell22 on">${ICONS.alignM}</span><span class="cell22">${ICONS.alignB}</span>
              <span class="sep"></span>
              <span class="cell22">${ICONS.orient}</span>${caret}<span class="sp10"></span>
              <span class="sep"></span>
              <span class="cell22">${ICONS.wrap}</span><span class="tx">自动换行</span>
            </div>
            <div class="row">
              <span class="cell22">${ICONS.left}</span><span class="cell22">${ICONS.center}</span><span class="cell22">${ICONS.right}</span>
              <span class="sep"></span>
              <span class="cell22">${ICONS.outdent}</span><span class="cell22">${ICONS.indent}</span>
              <span class="sep"></span>
              <span class="cell22">${ICONS.merge}</span><span class="tx">合并后居中</span><span class="car mr6"><i class="caret"></i></span>
            </div>
          </div></div>
          <div class="label">对齐方式<span class="launch"></span></div>
        </div>

        <div class="group w-num">
          <div class="body"><div class="tools">
            <div class="row"><div class="box numfmt"><span>常规</span><i class="caret"></i></div></div>
            <div class="row">
              <span class="cell22">${ICONS.currency}</span>${caret}
              <span class="cell22 pct">%</span><span class="cell20">,</span>
              <span class="sep"></span>
              <span class="cell22">${ICONS.incDec}</span><span class="cell22">${ICONS.decDec}</span>
            </div>
          </div></div>
          <div class="label">数字<span class="launch"></span></div>
        </div>

        <div class="group w-style">
          <div class="body pad3">
            <div class="big b53 hot">${ICONS.condFormat}条件格式<div><i class="caret"></i></div></div>
            <div class="big b62">${ICONS.tableFormat}套用<div>表格格式<i class="caret"></i></div></div>
            <div class="big b64">${ICONS.cellStyle}单元格样式<div><i class="caret"></i></div></div>
          </div>
          <div class="label plain">样式</div>
        </div>

        <div class="group w-cell">
          <div class="body pad4">
            <div class="big b42">${ICONS.insert}插入<div><i class="caret"></i></div></div>
            <div class="big b42">${ICONS.remove}删除<div><i class="caret"></i></div></div>
            <div class="big b42">${ICONS.format}格式<div><i class="caret"></i></div></div>
          </div>
          <div class="label plain">单元格</div>
        </div>

        <div class="group w-edit">
          <div class="body pad5">
            <div class="smalls col-s2">
              ${this.small(ICONS.sigma, '自动求和', 'far')} ${this.small(ICONS.fillDown, '填充', 'near')} ${this.small(ICONS.eraser, '清除', 'near')}
            </div>
            <div class="big b64">${ICONS.sort}排序和筛选<div><i class="caret"></i></div></div>
            <div class="big b64">${ICONS.find}查找和选择<div><i class="caret"></i></div></div>
          </div>
          <div class="label plain">编辑</div>
        </div>

        <div class="group w-inv">
          <div class="body">
            <div class="big b54">${ICONS.invoice}发票<div>查验</div></div>
          </div>
          <div class="label plain">发票查验</div>
        </div>
        <div class="collapse"></div>
      </div>

      <div class="formula">
        <div class="fbox namebox"><span>A1</span><i class="caret"></i></div>
        <div class="dots"><b></b><b></b><b></b></div>
        <div class="fbox fnbtns"><span>✕</span><span>✓</span><span class="fx">fx</span></div>
        <div class="fbox fninput"><span>XXX公司员工信息</span><span class="chev"></span></div>
      </div>

      <div class="sheetrow">
        <div class="sheet">${this.cells()}</div>
        <div class="vscroll">
          <div class="vbtn"></div>
          <div class="vthumb"></div>
          <div class="vgap"></div>
          <div class="vbtn dn"></div>
        </div>
      </div>

      <div class="tabs">
        <div class="tnav"><span class="tri"></span><span class="tri r"></span></div>
        <div class="t">田字格</div>
        <div class="t">成绩表</div>
        <div class="t orange">课程表</div>
        <div class="t active">员工信息</div>
        <div class="t sky">XXX公司销售额</div>
        <div class="tsep"></div>
        <div class="t pl">数据透视表教程</div>
        <div class="t wide">Sheet5</div>
        <div class="t wide">Sheet6</div>
        <div class="t wide">Sheet7</div>
        <div class="t wide">Sheet1</div>
        <div class="t wide">work</div>
        <div class="plus">+</div>
        <div class="tdots"><b></b><b></b><b></b></div>
        <div class="hscroll">
          <div class="hleft"><div class="hbtn"><span class="tri"></span></div><div class="hbtn"></div></div>
          <div class="hbtn"><span class="tri r"></span></div>
        </div>
      </div>

      <div class="status">
        <div class="sleft"><span>就绪</span><span>数字</span>${ICONS.macro}</div>
        <div class="stats">
          <span>平均值: 6218.671795</span><span>计数: 453</span><span>数值计数: 195</span>
          <span>最小值: 0</span><span>最大值: 45200</span><span>求和: 1212641</span>
        </div>
        <div class="view on">${ICONS.gridView}</div>
        <div class="view">${ICONS.pageView}</div>
        <div class="view">${ICONS.breakView}</div>
        <div class="zoombar"><b>-</b><span class="track"></span><b>+</b><span class="pct60">60%</span></div>
      </div>

      <div class="edge"></div>
      ${this.menu()}

      <svg class="stamp" width="36" height="36" viewBox="0 0 36 36">
        <circle cx="18" cy="18" r="16" fill="none" stroke="#f04a4a" stroke-width="1.2" />
        <circle cx="18" cy="18" r="12.5" fill="none" stroke="#f47a7a" stroke-width="3" stroke-dasharray="2 1" />
        <path d="M18 11.5l1.8 4.7 5 .2-3.9 3.1 1.3 4.8-4.2-2.7-4.2 2.7 1.3-4.8-3.9-3.1 5-.2z" fill="#f00" />
      </svg>

      <svg class="cursor" width="14" height="20" viewBox="0 0 14 20">
        <path d="M.5 .5v15l3.5-3 2.5 6 2.5-1-2.5-6h4.5z" fill="#fff" stroke="#222" />
      </svg>

      <div class="mark">
        <svg width="42" height="42" viewBox="0 0 42 42">
          <path d="M40 2C22 2 4 10 1 22c-1 6 4 9 9 7C5 26 5 20 11 14 18 8 30 4 40 2z" fill="#4aa3e0" />
          <path d="M8 22c1-5 8-9 14-8 4 1 5 4 3 7-1-3-4-4-8-3-4 0-7 2-9 4z" fill="#5b8fd0" />
          <path d="M28 12c6 1 8 6 5 12-4 7-14 12-27 15 9-4 20-9 22-16 1-4 1-8 0-11z" fill="#6cc46a" />
          <path d="M12 25c4 3 10 2 13-2-1 5-8 8-13 2z" fill="#8ccf6e" />
          <path d="M6 39c6-1 12-3 18-6-4 4-10 7-18 6z" fill="#e6dc6a" />
        </svg>
        <span class="cn">极光下载站</span>
        <span class="en">www.xz7.com</span>
      </div>

      <svg class="arrows" width="1503" height="1035">
        ${arrow(139, 264, 97, 60)} ${arrow(551, 250, 757, 112)} ${arrow(617, 413, 752, 377)}
      </svg>
    `;
  }
}

declare global {
  interface HTMLElementTagNameMap {
    'app-root': AppRoot;
  }
}
